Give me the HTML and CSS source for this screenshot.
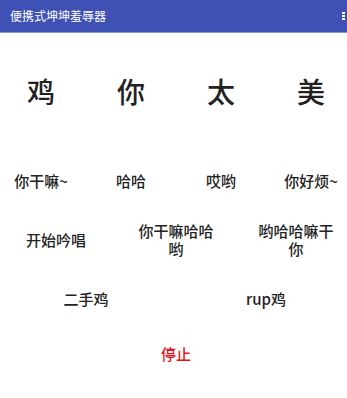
FILE: index.html
```
<!DOCTYPE html>
<html lang="zh">
<head>
<meta charset="utf-8">
<title>便携式坤坤羞辱器</title>
<link rel="stylesheet" href="styles.css">
</head>
<body>
<header class="appbar">
  <span class="title">便携式坤坤羞辱器</span>
  <span class="menu"><i></i><i></i><i></i></span>
</header>
<main class="content">
  <div class="row row-big">
    <span>鸡</span><span>你</span><span>太</span><span>美</span>
  </div>
  <div class="row row-four">
    <span>你干嘛~</span><span>哈哈</span><span>哎哟</span><span>你好烦~</span>
  </div>
  <div class="row row-three">
    <span class="cell"><span class="txt">开始吟唱</span></span>
    <span class="cell"><span class="txt">你干嘛哈哈哟</span></span>
    <span class="cell"><span class="txt">哟哈哈嘛干你</span></span>
  </div>
  <div class="row row-two">
    <span>二手鸡</span><span>rup鸡</span>
  </div>
  <div class="row row-stop">
    <span class="stop">停止</span>
  </div>
</main>
</body>
</html>
```
FILE: styles.css
```
html, body {
  margin: 0;
  padding: 0;
  background: #ffffff;
  overflow: hidden;
}
body {
  font-family: "Noto Sans CJK SC", "Noto Sans", sans-serif;
  color: #222222;
  width: 347px;
  height: 398px;
}
.appbar {
  height: 32px;
  background: #3f51b5;
  border-bottom: 1px solid #8c95cf;
  display: flex;
  align-items: center;
  justify-content: space-between;
  padding: 0 2px 0 10px;
}
.title {
  color: #ffffff;
  font-size: 12px;
  line-height: 16px;
}
.menu {
  display: flex;
  flex-direction: column;
  gap: 1px;
}
.menu i {
  display: block;
  width: 3px;
  height: 2px;
  background: #ffffff;
}
.content {
  margin-left: -4px;
  width: 360px;
  display: flex;
  flex-direction: column;
  font-weight: 500;
}
.row {
  display: grid;
  justify-items: center;
  align-items: center;
}
.row-big {
  grid-template-columns: repeat(4, 90px);
  margin-top: 38px;
  height: 40px;
  font-size: 28px;
  line-height: 40px;
}
.row-four {
  grid-template-columns: repeat(4, 90px);
  margin-top: 60px;
  height: 20px;
  font-size: 15px;
  line-height: 20px;
}
.row-three {
  grid-template-columns: repeat(3, 120px);
  margin-top: 31px;
  height: 36px;
  font-size: 15px;
  line-height: 18px;
}
.row-three .txt {
  display: block;
  width: 80px;
  text-align: center;
}
.row-three .cell {
  display: flex;
  justify-content: center;
}
.row-two {
  grid-template-columns: repeat(2, 180px);
  margin-top: 31px;
  height: 20px;
  font-size: 15px;
  line-height: 20px;
}
.row-stop {
  grid-template-columns: 360px;
  margin-top: 35px;
  height: 20px;
  font-size: 15px;
  line-height: 20px;
}
.stop {
  color: #e3141b;
}
```
